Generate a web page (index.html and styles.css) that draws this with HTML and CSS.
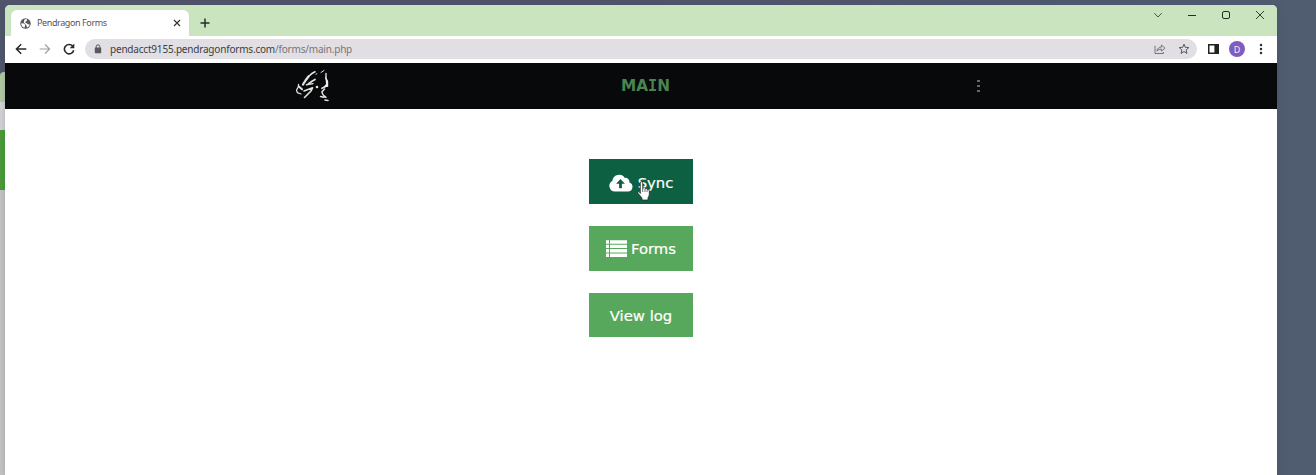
FILE: index.html
```html
<!DOCTYPE html>
<html lang="en">
<head>
<meta charset="utf-8">
<title>Pendragon Forms</title>
<link rel="stylesheet" href="styles.css">
</head>
<body>
<div class="desktop">
  <div class="behind"><div class="behind-title"></div><div class="behind-bar"></div><div class="behind-green"></div><div class="behind-page"></div></div>
  <main class="window">
    <header class="tabstrip">
      <div class="tab">
        <svg class="globe" width="11" height="11" viewBox="0 0 11 11"><circle cx="5.5" cy="5.5" r="5.2" fill="#55585d"/><path d="M1.2 5.2 4 5.4 5.2 6.7 4.7 9.6C2.6 9.3 1.1 7.6 1.2 5.2ZM4.6 1.2 7 1.3 7.2 2.3 5.8 3.5 5.2 4.9 6.8 5.2 7.8 6.3 9.7 6.4C9.4 8 8.2 9 7 9.5L6.6 7.8 5.5 6.2 3.8 4.4Z" fill="#fff"/></svg>
        <span class="tab-title">Pendragon Forms</span>
        <svg class="tab-close" width="8" height="8" viewBox="0 0 8 8"><path d="M1 1 7 7M7 1 1 7" stroke="#303630" stroke-width="1.2"/></svg>
      </div>
      <svg class="plus" width="10" height="10" viewBox="0 0 10 10"><path d="M5 .5V9.5M.5 5H9.5" stroke="#263022" stroke-width="1.5"/></svg>
      <div class="controls">
        <svg width="10" height="10" viewBox="0 0 10 10"><path d="M1.3 3.2 5 7 8.7 3.2" fill="none" stroke="#49563f"/></svg>
        <svg width="10" height="10" viewBox="0 0 10 10"><path d="M1 5.5H9" stroke="#263022"/></svg>
        <svg width="10" height="10" viewBox="0 0 10 10"><rect x="1.5" y="1.5" width="7" height="7" rx="1.5" fill="none" stroke="#263022"/></svg>
        <svg width="10" height="10" viewBox="0 0 10 10"><path d="M1 1 9 9M9 1 1 9" stroke="#35402f"/></svg>
      </div>
    </header>
    <div class="toolbar">
      <div class="nav">
        <svg width="12" height="12" viewBox="0 0 12 12"><path d="M11.3 6H1.5M6.2 1.2 1.4 6 6.2 10.8" fill="none" stroke="#292a2c" stroke-width="1.5"/></svg>
        <svg width="12" height="12" viewBox="0 0 12 12"><path d="M.7 6H10.5M6 1.5 10.6 6 6 10.5" fill="none" stroke="#a0a0a2" stroke-width="1.2"/></svg>
        <svg width="12" height="12" viewBox="0 0 12 12"><path d="M9.8 3.2A4.7 4.7 0 1 0 10.7 7.2" fill="none" stroke="#292a2c" stroke-width="1.6"/><path d="M11.3.6V5.2H6.7Z" fill="#292a2c"/></svg>
      </div>
      <div class="omnibox">
        <svg width="8" height="10" viewBox="0 0 8 10"><rect x=".8" y="3.5" width="6.4" height="5.7" rx=".6" fill="#57595d"/><path d="M2.2 4V2.6a1.8 1.8 0 0 1 3.6 0V4" fill="none" stroke="#57595d"/></svg>
        <span class="url">pendacct9155.pendragonforms.com<span class="path">/forms/main.php</span></span>
        <svg class="share" width="12" height="12" viewBox="0 0 12 12"><path d="M1 2.7V10.5H9.4V9M2.9 8.1C3.4 5.2 5 4.2 7.4 4.1V2L11 5.2 7.4 8.1V6.1C5.4 6.1 4.2 6.7 2.9 8.1Z" fill="none" stroke="#68696d" stroke-width=".9"/></svg>
        <svg class="star" width="12" height="12" viewBox="0 0 12 12"><path d="M6 1.2 7.3 4.3 10.8 4.6 8.1 6.9 9 10.4 6 8.5 3 10.4 3.9 6.9 1.2 4.6 4.7 4.3Z" fill="none" stroke="#55585d"/></svg>
      </div>
      <svg class="panel" width="11" height="10" viewBox="0 0 11 10"><path d="M.75.75H10.25V9.25H.75Z" fill="none" stroke="#222" stroke-width="1.5"/><path d="M6.4 0H11V10H6.4Z" fill="#222"/></svg>
      <span class="avatar">D</span>
      <svg class="dots" width="4" height="12" viewBox="0 0 4 12"><g fill="#303134"><circle cx="2" cy="2" r="1.25"/><circle cx="2" cy="6" r="1.25"/><circle cx="2" cy="10" r="1.25"/></g></svg>
    </div>
    <div class="appbar">
      <svg class="logo" width="36" height="34" viewBox="0 0 36 34"><g fill="none" stroke="#dfe2df" stroke-linecap="round" stroke-linejoin="round"><path d="M9 15.5 11.5 11.5 14.5 7.5" stroke-width="2.3"/><path d="M14.5 7.5 17.5 4.8 21 2.8" stroke-width="1.6"/><path d="M14.5 14.8 18 12.3 21 10.5" stroke-width="1.7"/><path d="M12.5 15.8 19 14.6" stroke-width="1.4"/><path d="M4.5 15.5 4.3 18 2.5 21 3.3 23.6 7 25" stroke-width="1.3"/><path d="M4.8 17.5 8 20.3" stroke-width="2"/><path d="M10 22 14 20.5 18.5 18.8 17 22 13.5 25.5 10.5 28.5" stroke-width="1.6"/><path d="M27 3.5 30 1.5M22 5.5 22.8 4.5" stroke-width="1"/><path d="M32 4.5 32 10" stroke-width="1.4"/><path d="M28 19.3 31 17.8 33 16.8" stroke-width="1.8"/><path d="M30.5 20 27.8 23 29.2 26 32 28.3M26.5 27.5 30 28.3M31 31 34 31.5" stroke-width="1.5"/></g><path d="M31.3 7 34.2 12V17.7L29.5 18.2 32 15Z" fill="#eef0ee"/><circle cx="23" cy="18" r="1.3" fill="#dfe2df"/></svg>
      <h1 class="heading">MA<span class="slab">I</span>N</h1>
      <svg class="menu" width="3" height="14" viewBox="0 0 3 14"><path d="M0 2H3M0 7H3M0 12H3" stroke="#858a86" stroke-width="1.5"/></svg>
    </div>
    <section class="actions">
      <button class="button active">
        <svg class="cloud" width="24" height="18" viewBox="0 0 24 18"><path d="M6 17.5A5.5 5.5 0 0 1 3.4 7.1 6.7 6.7 0 0 1 15.8 3.9 4 4 0 0 1 20.4 8.4 4.7 4.7 0 0 1 19 17.5Z" fill="#fff"/><path d="M11.5 5 15.9 9.7H12.9V14.2H10.1V9.7H7.1Z" fill="#0d6041"/></svg>
        <span>Sync</span>
        <svg class="pointer" width="15" height="20" viewBox="0 0 15 20"><path d="M4.3 12.5V2.2Q4.4.8 5.5.8T6.7 2.2V7.2Q8.7 5.7 9.1 7.6 10.8 6.8 11.2 8.5 13.4 7.8 13.3 10V13.3Q13.2 15.3 12 16.7V19H6V17L2.2 12.4Q1.4 10.8 2.4 10.4T4.3 12.5Z" fill="#fff" stroke="#26332e" stroke-width=".8"/><path d="M6.7 7V11M9 8V11M11.1 9V11" stroke="#26332e" stroke-width=".7"/></svg>
      </button>
      <button class="button">
        <svg class="list" width="21" height="17" viewBox="0 0 21 17"><path d="M0 2H3M4 2H21M0 6.4H3M4 6.4H21M0 10.8H3M4 10.8H21M0 15.2H3M4 15.2H21" stroke="#fff" stroke-width="3.4"/></svg>
        <span>Forms</span>
      </button>
      <button class="button"><span>View log</span></button>
    </section>
  </main>
</div>
</body>
</html>
```
FILE: styles.css
```css
* { box-sizing: border-box; }
body { margin: 0; }
svg { display: block; flex: none; }
.desktop { display: flex; width: 1316px; height: 475px; overflow: hidden; background: linear-gradient(90deg, #50556b 0%, #505469 40%, #505d70 100%); font-family: "Noto Sans", sans-serif; }
.behind { width: 5px; padding-top: 72px; }
.behind-title { height: 30px; background: #b3cda6; border-radius: 4px 0 0; }
.behind-bar { height: 28px; background: #d5d6d7; }
.behind-green { height: 60px; background: #4a9c38; }
.behind-page { height: 285px; background: #c6c6c6; }
.window { display: flex; flex-direction: column; width: 1272px; height: 470px; margin-top: 5px; background: #fff; border-radius: 5px 5px 0 0; overflow: hidden; box-shadow: 0 2px 8px #2f3b4b40; }
.tabstrip { display: flex; align-items: flex-start; height: 31px; background: #cbe4c0; }
.tab { display: flex; align-items: center; width: 178px; height: 26px; margin: 5px 0 0 6px; padding: 0 8px 0 9px; background: #fff; border-radius: 6px 6px 0 0; }
.tab-title { margin-left: 6px; color: #51555a; font-size: 9px; letter-spacing: -0.4px; line-height: 14px; white-space: nowrap; }
.tab-close { margin-left: auto; }
.plus { margin: 13px 0 0 11px; }
.controls { display: flex; gap: 24px; margin: 5px 12px 0 auto; }
.toolbar { display: flex; align-items: center; height: 27px; padding-bottom: 1px; background: #fff; }
.nav { display: flex; gap: 12px; width: 80px; padding-left: 10px; }
.omnibox { display: flex; align-items: center; width: 1112px; height: 20px; padding: 0 7px 0 9px; background: #e2dfe4; border-radius: 10px; }
.url { margin-left: 8px; color: #3b3d41; font-size: 10px; letter-spacing: -0.2px; line-height: 16px; white-space: nowrap; }
.path { color: #777579; }
.share { margin-left: auto; }
.star { margin-left: 12px; }
.panel { margin-left: 11px; }
.avatar { display: flex; align-items: center; justify-content: center; width: 16px; height: 16px; margin-left: 10px; border-radius: 50%; background: #805cc0; color: #f4eefc; font-size: 9px; }
.dots { margin-left: 14px; }
.appbar { display: grid; grid-template-columns: 289px 327px 356px 1fr; align-items: center; height: 46px; background: #07090a; }
.logo { grid-column: 2; }
.heading { grid-column: 3; margin: 0; color: #498451; font: 700 15.3px/22px "DejaVu Sans", sans-serif; }
.slab { font-family: "DejaVu Sans Mono", monospace; }
.menu { grid-column: 4; }
.actions { display: flex; flex-direction: column; align-items: center; gap: 22px; padding-top: 50.4px; }
.button { position: relative; display: flex; align-items: center; justify-content: center; width: 104px; height: 44.7px; padding: 1px 0 0; border: 0; background: #57a85c; color: #fff; font: 14.8px/22px "DejaVu Sans", sans-serif; -webkit-text-stroke: 0.2px #fff; }
.active { padding-top: 2px; background: #0d6041; }
.cloud { margin-right: 5px; }
.list { margin-right: 4px; }
.pointer { position: absolute; left: 47px; top: 22px; }
```
